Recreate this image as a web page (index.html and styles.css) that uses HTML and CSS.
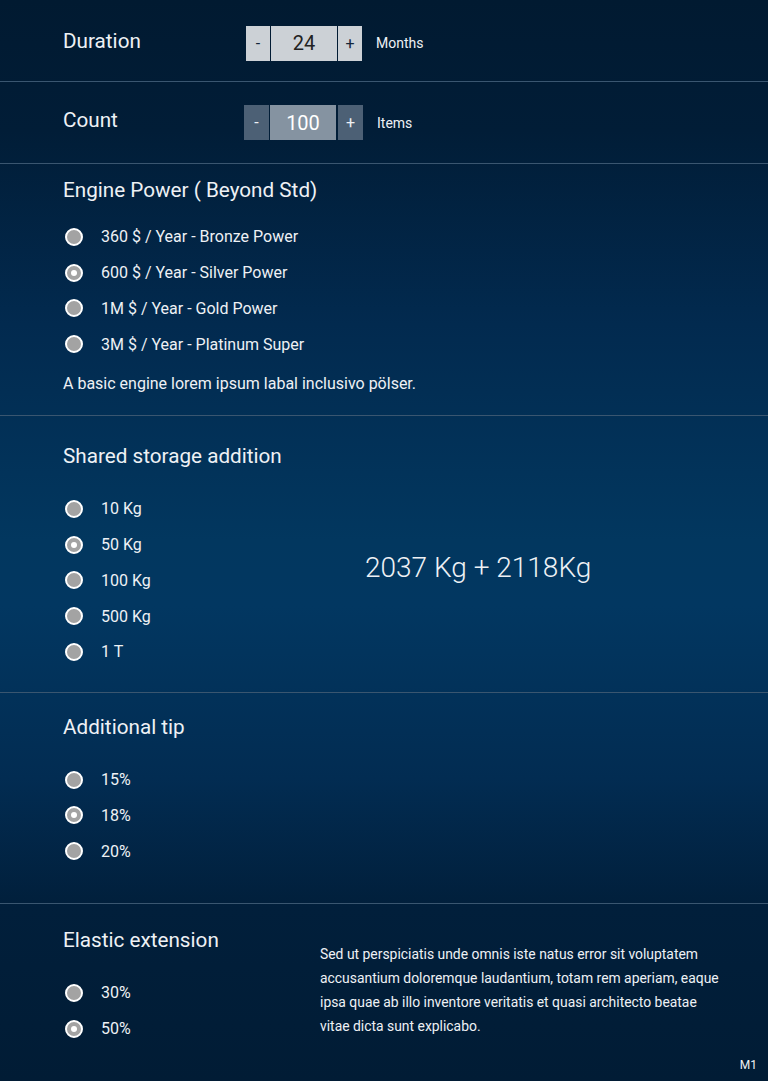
FILE: index.html
```html
<!DOCTYPE html>
<html lang="en">
<head>
  <meta charset="UTF-8">
  <meta name="viewport" content="width=device-width, initial-scale=1.0">
  <title>Order options</title>
  <link rel="stylesheet" href="styles.css">
</head>
<body>

  <div class="panel">

    <!-- Quantity rows -->
    <div class="qty-row qty-duration">
      <div class="row-label">Duration</div>
      <div class="stepper">
        <button class="step">-</button>
        <div class="step-value">24</div>
        <button class="step">+</button>
      </div>
      <span class="unit">Months</span>
    </div>

    <div class="qty-row qty-count">
      <div class="row-label">Count</div>
      <div class="stepper stepper-dim">
        <button class="step">-</button>
        <div class="step-value">100</div>
        <button class="step">+</button>
      </div>
      <span class="unit">Items</span>
    </div>

    <!-- Engine power -->
    <section class="group group-engine">
      <h2 class="group-title">Engine Power ( Beyond Std)</h2>
      <ul class="options">
        <li><span class="radio"></span>360 $ / Year - Bronze Power</li>
        <li><span class="radio checked"></span>600 $ / Year - Silver Power</li>
        <li><span class="radio"></span>1M $ / Year - Gold Power</li>
        <li><span class="radio"></span>3M $ / Year - Platinum Super</li>
      </ul>
      <p class="group-note">A basic engine lorem ipsum labal inclusivo pölser.</p>
    </section>

    <!-- Shared storage -->
    <section class="group group-storage">
      <h2 class="group-title">Shared storage addition</h2>
      <div class="split">
        <ul class="options options-narrow">
          <li><span class="radio"></span>10 Kg</li>
          <li><span class="radio checked"></span>50 Kg</li>
          <li><span class="radio"></span>100 Kg</li>
          <li><span class="radio"></span>500 Kg</li>
          <li><span class="radio"></span>1 T</li>
        </ul>
        <div class="total">2037 Kg + 2118Kg</div>
      </div>
    </section>

    <!-- Tip -->
    <section class="group group-tip">
      <h2 class="group-title">Additional tip</h2>
      <ul class="options">
        <li><span class="radio"></span>15%</li>
        <li><span class="radio checked"></span>18%</li>
        <li><span class="radio"></span>20%</li>
      </ul>
    </section>

    <!-- Elastic extension -->
    <section class="group group-elastic">
      <div class="split">
        <div class="elastic-left">
          <h2 class="group-title">Elastic extension</h2>
          <ul class="options">
            <li><span class="radio"></span>30%</li>
            <li><span class="radio checked"></span>50%</li>
          </ul>
        </div>
        <p class="elastic-text">Sed ut perspiciatis unde omnis iste natus error sit voluptatem accusantium doloremque laudantium, totam rem aperiam, eaque ipsa quae ab illo inventore veritatis et quasi architecto beatae vitae dicta sunt explicabo.</p>
      </div>
      <span class="page-tag">M1</span>
    </section>

  </div>

</body>
</html>
```

FILE: styles.css
```css
* {
  box-sizing: border-box;
}

body {
  margin: 0;
  padding: 0;
  font-family: Roboto, "Liberation Sans", Arial, sans-serif;
  color: #eef1f5;
  background: linear-gradient(180deg, #011a31 0%, #011d37 12%, #022a4f 30%, #02375f 50%, #023761 56%, #022c52 72%, #011f3b 84%, #011c35 100%);
  min-height: 1081px;
}

.panel {
  min-height: 1081px;
}

/* quantity rows */

.qty-row {
  display: flex;
  align-items: center;
  height: 82px;
  padding-left: 63px;
  border-bottom: 1px solid #3a5670;
}

.row-label {
  width: 183px;
  font-size: 20.7px;
}

.qty-duration .stepper,
.qty-duration .unit {
  margin-top: 5px;
}

.qty-count .row-label {
  width: 181px;
  margin-bottom: 5px;
}

.stepper {
  display: flex;
  gap: 1px;
  height: 35px;
}

.step {
  width: 24px;
  border: none;
  padding: 0;
  background-color: #ccd1d6;
  color: #14263a;
  font-family: inherit;
  font-size: 16px;
  cursor: pointer;
}

.step-value {
  width: 66px;
  display: flex;
  align-items: center;
  justify-content: center;
  background-color: #ccd1d6;
  color: #222;
  font-size: 20px;
}

.stepper-dim .step {
  width: 25px;
  background-color: #4c6075;
  color: #eef1f5;
}

.stepper-dim .step:last-child {
  margin-left: 1px;
}

.stepper-dim .step-value {
  background-color: #8593a1;
  color: #fff;
}

.unit {
  margin-left: 14px;
  font-size: 14px;
}

/* option groups */

.group {
  padding-left: 63px;
  border-bottom: 1px solid #3a5670;
}

.group-title {
  margin: 0;
  font-size: 20.7px;
  font-weight: normal;
  line-height: 24px;
}

.options {
  list-style-type: none;
  margin: 0;
  padding: 0;
}

.options li {
  display: flex;
  align-items: center;
  height: 35.75px;
  font-size: 16px;
}

.radio {
  position: relative;
  width: 18px;
  height: 18px;
  margin-left: 2px;
  margin-right: 18px;
  border: 2px solid #fff;
  border-radius: 50%;
  background-color: #a3a3a3;
}

.radio.checked::after {
  content: "";
  position: absolute;
  top: 4px;
  left: 4px;
  width: 6px;
  height: 6px;
  border-radius: 50%;
  background-color: #fff;
}

.group-engine {
  padding-top: 14px;
  padding-bottom: 19px;
}

.group-engine .group-title {
  margin-bottom: 17px;
}

.group-note {
  margin: 10px 0 0;
  font-size: 16px;
  line-height: 24px;
}

.group-storage {
  padding-top: 28px;
  padding-bottom: 22px;
}

.group-storage .group-title,
.group-tip .group-title,
.elastic-left .group-title {
  margin-bottom: 23px;
}

.split {
  display: flex;
}

.options-narrow {
  width: 302px;
}

.total {
  align-self: center;
  margin-bottom: 24px;
  font-size: 28px;
  font-weight: 300;
  line-height: 36px;
}

.group-tip {
  padding-top: 22px;
  padding-bottom: 34px;
}

.group-elastic {
  position: relative;
  height: 177px;
  padding-top: 24px;
  border-bottom: none;
}

.elastic-left {
  width: 257px;
}

.elastic-text {
  width: 405px;
  margin: 14px 0 0;
  font-size: 13.9px;
  line-height: 24px;
}

.page-tag {
  position: absolute;
  right: 11px;
  bottom: 9px;
  font-size: 12px;
}
```
